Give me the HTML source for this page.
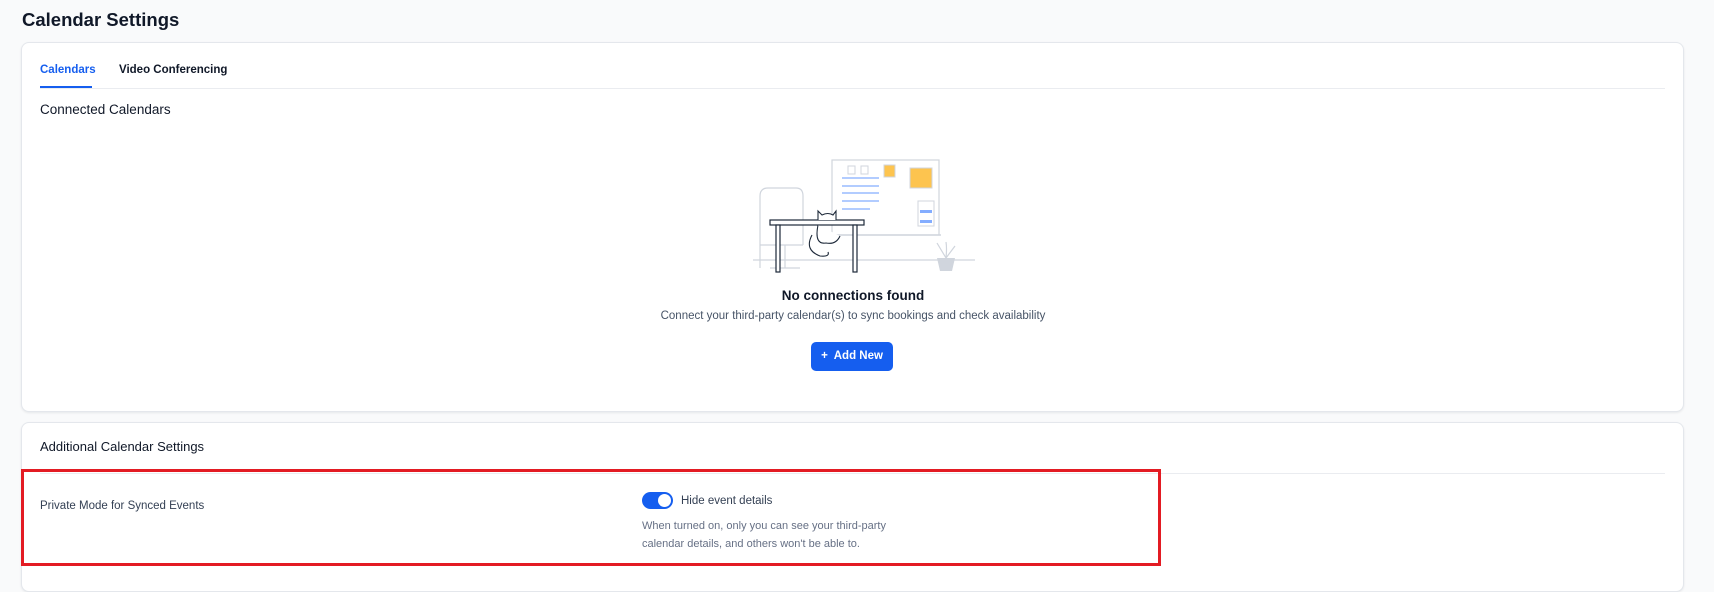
<!DOCTYPE html>
<html><head><meta charset="utf-8"><style>
*{box-sizing:border-box;margin:0;padding:0}
body{width:1714px;height:577px;background:#f9fafb;font-family:"Liberation Sans",sans-serif;color:#101828;position:relative;overflow:hidden}
.a{position:absolute;white-space:nowrap}
.card{position:absolute;background:#fff;border:1px solid #e4e7ec;border-radius:8px;box-shadow:0 1px 2px rgba(16,24,40,.08)}
</style></head><body>
<div class="a" style="left:22px;top:9px;font-size:18.5px;font-weight:bold;color:#101828">Calendar Settings</div>
<div class="card" style="left:21px;top:42px;width:1663px;height:370px"></div>
<div class="a" style="left:40px;top:64px;font-size:11.5px;font-weight:bold;color:#155eef">Calendars</div>
<div class="a" style="left:40px;top:86px;width:52px;height:2px;background:#155eef"></div>
<div class="a" style="left:119px;top:64px;font-size:11.5px;font-weight:bold;color:#101828">Video Conferencing</div>
<div class="a" style="left:40px;top:88px;width:1625px;height:1px;background:#eaecf0"></div>
<div class="a" style="left:40px;top:102px;font-size:13.5px;color:#101828">Connected Calendars</div>
<svg class="a" style="left:740px;top:150px" width="240" height="130" viewBox="740 150 240 130">
<line x1="753" y1="260" x2="975" y2="260" stroke="#d0d5dd" stroke-width="1.2"/>
<rect x="832" y="160" width="107" height="75" fill="#fff" stroke="#d0d5dd" stroke-width="1.2"/>
<line x1="830" y1="235" x2="941" y2="235" stroke="#d0d5dd" stroke-width="1.5"/>
<rect x="848" y="166" width="7" height="8" fill="none" stroke="#d0d5dd"/>
<rect x="861" y="166" width="7" height="8" fill="none" stroke="#d0d5dd"/>
<rect x="884" y="165" width="11" height="12" fill="#fdc44f" stroke="#d0d5dd"/>
<rect x="910" y="168" width="22" height="20" fill="#fdc44f" stroke="#d0d5dd"/>
<g stroke="#84adff" stroke-width="1.2"><line x1="842" y1="178" x2="879" y2="178"/><line x1="842" y1="186" x2="879" y2="186"/><line x1="842" y1="193" x2="879" y2="193"/><line x1="842" y1="201" x2="879" y2="201"/><line x1="842" y1="209" x2="870" y2="209"/></g>
<rect x="918" y="201" width="16" height="25" fill="#fff" stroke="#d0d5dd"/>
<rect x="920" y="210" width="12" height="3" fill="#84adff"/><rect x="920" y="220" width="12" height="3" fill="#84adff"/>
<path d="M760 268 V196 Q760 188 768 188 H796 Q803 188 803 196 V245 M760 245 H803 M785 245 V268 M770 268 H800" fill="none" stroke="#d0d5dd" stroke-width="1.2"/>
<rect x="770" y="220" width="94" height="5" fill="#fff" stroke="#1d2939" stroke-width="1.2"/>
<rect x="776" y="225" width="4" height="47" fill="#fff" stroke="#1d2939" stroke-width="1.2"/>
<rect x="853" y="225" width="4" height="47" fill="#fff" stroke="#1d2939" stroke-width="1.2"/>
<path d="M818 220 L818 211 L822 215 Q828 212 833 215 L836 211 L836 220 M818 225 Q814 245 826 243 Q836 245 840 236 M812 235 Q804 250 820 256 Q830 257 828 252" fill="#fff" stroke="#1d2939" stroke-width="1.1"/>
<path d="M940 271 L937 258 H955 L952 271 Z" fill="#d0d5dd"/>
<path d="M946 258 Q940 248 937 243 M946 258 Q947 248 946 242 M946 258 Q952 250 955 246" fill="none" stroke="#d0d5dd" stroke-width="1.2"/>
</svg>
<div class="a" style="left:0;width:1714px;top:288px;text-align:center;font-size:13.5px;font-weight:bold;color:#101828"><span style="position:relative;left:-4px">No connections found</span></div>
<div class="a" style="left:0;width:1714px;top:310px;text-align:center;font-size:11.5px;color:#475467"><span style="position:relative;left:-4px">Connect your third-party calendar(s) to sync bookings and check availability</span></div>
<div class="a" style="left:811px;top:342px;width:82px;height:29px;background:#155eef;border-radius:5px;color:#fff;font-size:11.5px;font-weight:bold;text-align:center;line-height:29px">+&nbsp; Add New</div>
<div class="card" style="left:21px;top:422px;width:1663px;height:170px"></div>
<div class="a" style="left:40px;top:439px;font-size:13px;color:#101828">Additional Calendar Settings</div>
<div class="a" style="left:40px;top:473px;width:1625px;height:1px;background:#eaecf0"></div>
<div class="a" style="left:21px;top:469px;width:1140px;height:97px;border:3px solid #e31b23"></div>
<div class="a" style="left:40px;top:500px;font-size:11.5px;color:#344054">Private Mode for Synced Events</div>
<div class="a" style="left:642px;top:492px;width:31px;height:17px;border-radius:9px;background:#155eef"><div style="position:absolute;right:2px;top:2px;width:13px;height:13px;border-radius:50%;background:#fff"></div></div>
<div class="a" style="left:681px;top:495px;font-size:11.5px;color:#344054">Hide event details</div>
<div class="a" style="left:642px;top:517px;font-size:11px;line-height:18px;color:#667085">When turned on, only you can see your third-party<br>calendar details, and others won't be able to.</div>
</body></html>
